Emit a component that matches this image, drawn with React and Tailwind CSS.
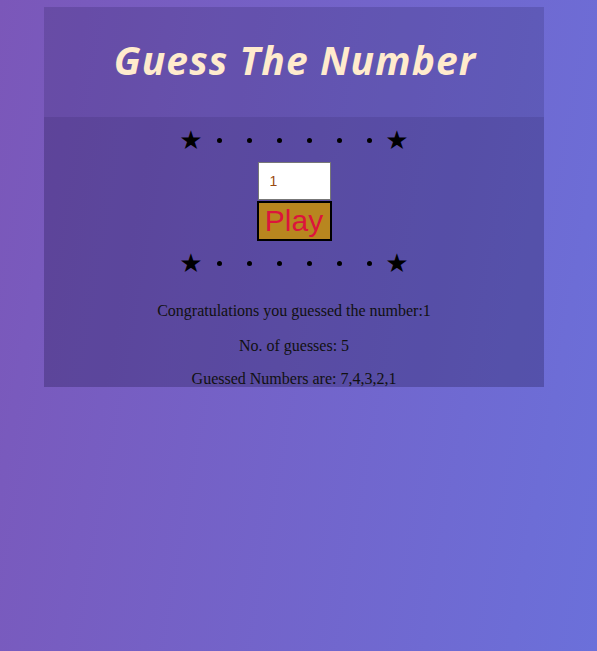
export default function App() {
  const dots = [0, 1, 2, 3, 4, 5];
  const Stars = () => (
    <div className="flex h-[24px] items-center justify-center text-black">
      <span className="flex w-[26px] justify-center text-[26px] leading-none font-['DejaVu_Sans',sans-serif]">★</span>
      {dots.map((d) => (
        <span key={d} className="flex w-[30px] justify-center">
          <span className="block h-[5px] w-[5px] rounded-full bg-black" />
        </span>
      ))}
      <span className="flex w-[26px] justify-center text-[26px] leading-none font-['DejaVu_Sans',sans-serif]">★</span>
    </div>
  );
  return (
    <div className="min-h-[651px] w-full bg-[linear-gradient(100deg,#7b57b9_0%,#6b70da_100%)] pt-[7px]">
      <div className="ml-[44px] h-[380px] w-[500px]">
        <div className="flex h-[110px] items-center justify-center bg-[rgba(20,10,60,0.17)] pb-[4px]">
          <h1 className="pl-[2px] text-[39px] font-bold italic tracking-[1.1px] text-[#ffebcd] font-['Open_Sans',sans-serif]">
            Guess The Number
          </h1>
        </div>
        <div className="h-[270px] bg-[rgba(20,10,60,0.27)] pt-[11px] font-['Liberation_Serif',serif] text-[16px] text-[#111]">
          <Stars />
          <div className="mt-[10px] flex flex-col items-center">
            <input
              readOnly
              value="1"
              className="box-border h-[38px] w-[73px] border border-[#777] bg-white pl-[11px] text-[14px] text-[#9a4a10] outline-none font-['Liberation_Sans',sans-serif]"
            />
            <button className="mt-px box-border h-[40px] w-[75px] border-2 border-black bg-[#b8861f] text-[30px] leading-none text-[#dc143c] font-['Liberation_Sans',sans-serif]">
              Play
            </button>
          </div>
          <div className="mt-[10px]">
            <Stars />
          </div>
          <p className="mt-[27px] text-center leading-[18px]">Congratulations you guessed the number:1</p>
          <p className="mt-[17px] text-center leading-[18px]">No. of guesses: 5</p>
          <p className="mt-[15px] text-center leading-[18px]">Guessed Numbers are: 7,4,3,2,1</p>
        </div>
      </div>
    </div>
  );
}
